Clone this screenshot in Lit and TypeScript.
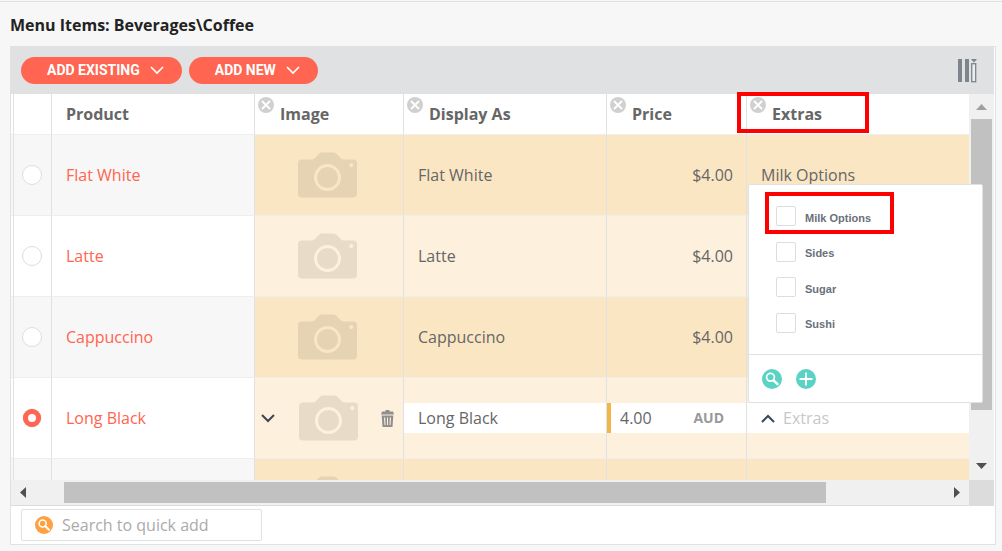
import { LitElement, html, css, svg, nothing } from "lit";
import { customElement, state } from "lit/decorators.js";
import { classMap } from "lit/directives/class-map.js";

interface MenuItem {
  name: string;
  price: string;
  extras: string;
}

const ITEMS: MenuItem[] = [
  { name: "Flat White", price: "$4.00", extras: "Milk Options" },
  { name: "Latte", price: "$4.00", extras: "" },
  { name: "Cappuccino", price: "$4.00", extras: "" },
  { name: "Long Black", price: "4.00", extras: "" },
  { name: "", price: "", extras: "" },
];

const EXTRAS = ["Milk Options", "Sides", "Sugar", "Sushi"];

const chevron = (up = false) => html`<svg class="chevron" width="14" height="9" viewBox="0 0 14 9" aria-hidden="true">
  ${up ? svg`<path d="M1 8 L7 2 L13 8" />` : svg`<path d="M1 1 L7 7 L13 1" />`}
</svg>`;

const camera = html`<svg class="camera" width="59" height="46" viewBox="0 0 59 46" aria-hidden="true">
  <path
    fill-rule="evenodd"
    d="M4 7.500H13.500Q15.500 7.500 17 6L21 1.800Q22.500 .5 24.500 .5H35Q37 .5 38.500 1.800L42.500 6Q44 7.500 46 7.500H55Q59 7.500 59 11.500V41.500Q59 45.500 55 45.500H4Q0 45.500 0 41.500V11.500Q0 7.500 4 7.500ZM29.500 12A13.500 13.500 0 1 0 29.500 39A13.500 13.500 0 1 0 29.500 12ZM53.300 11A2.100 2.100 0 1 0 53.300 15.200A2.100 2.100 0 1 0 53.300 11Z"
  />
  <circle cx="29.500" cy="25.500" r="10.500" />
</svg>`;

const trash = html`<svg width="13" height="17" viewBox="0 0 13 17" aria-hidden="true">
  <path fill="#8f8f8f" d="M4.500 0H8.500V1.500H12L13 4.500H0L1 1.500H4.500Z" />
  <path fill="#8f8f8f" fill-rule="evenodd" d="M.7 5.500H12.300L11.500 17H1.500ZM3 7.500L3.500 15H4.500L4.200 7.500ZM6 7.500V15H7V7.500ZM8.800 7.500L8.500 15H9.500L10 7.500Z" />
</svg>`;

const magnifier = (size: number) => html`<svg width=${size} height=${size} viewBox="0 0 20 20" aria-hidden="true">
  <circle class="disc" cx="10" cy="10" r="10" />
  <circle cx="8.500" cy="8.300" r="3.900" fill="none" stroke="#fff" stroke-width="1.700" />
  <path d="M11.500 11.300L15.500 15.200" stroke="#fff" stroke-width="2.400" stroke-linecap="round" />
</svg>`;

@customElement("app-root")
export class AppRoot extends LitElement {
  @state() private selected = 3;

  static styles = css`
    :host {
      display: block;
      min-height: 100vh;
      box-sizing: border-box;
      padding: 1px 6px 6px 10px;
      background: #f7f7f7;
      font: 16px/22px "Open Sans", "Noto Sans", sans-serif;
      color: #666;
    }
    *, *::before { box-sizing: border-box; }
    button, input { font: inherit; color: inherit; border: 0; padding: 0; margin: 0; background: none; border-radius: 0; }
    button { cursor: pointer; display: inline-flex; align-items: center; justify-content: center; }
    svg { display: block; flex: none; }
    .rule { height: 1px; background: #e0e0e0; margin: 0 -6px 0 -10px; }
    h1 { margin: 0; padding: 12px 0 10px; font-size: 16px; line-height: 22px; font-weight: 700; color: #222; }
    .panel { border: 1px solid #e0e1e3; background: #fff; }
    .toolbar { display: flex; align-items: center; gap: 7px; height: 47px; margin-right: 1px; padding: 0 17px 0 10px; background: #e0e1e3; }
    .pill {
      height: 27px; border-radius: 14px; background: #ff6550; color: #fff;
      padding: 0 18px 0 26px; gap: 10px;
      font: 700 14px/27px Roboto, sans-serif;
    }
    .columns { margin-left: auto; }
    .chevron path { fill: none; stroke: #3d4654; stroke-width: 2; }
    .pill .chevron path { stroke: #fff; stroke-width: 1.600; }

    .grid { position: relative; display: grid; grid-template-columns: minmax(0, 1fr) 25px; margin-right: 1px; border-bottom: 1px solid #dcdcdc; }
    .viewport { height: 386px; overflow: hidden; }
    table { width: 100%; table-layout: fixed; border-collapse: separate; border-spacing: 0; }
    th, td { padding: 0; border-right: 1px solid #e0e1e3; border-bottom: 1px solid #eee; text-align: left; font-weight: 400; }
    th:last-child, td:last-child { border-right: 0; }
    th { height: 41px; font-weight: 700; vertical-align: top; }
    td { height: 81px; vertical-align: middle; }
    .w-edge { width: 3px; }
    .w-radio { width: 38px; }
    .w-text { width: 203px; }
    .w-image { width: 149px; }
    .w-price { width: 140px; }
    .head { display: flex; gap: 6px; padding: 3px 0 0 3px; }
    .head span { padding-top: 6px; }
    .head.plain { padding-left: 14px; }
    .remove { width: 16px; height: 16px; }
    .plain-cell { background: #fff; }
    .tint { background: #fdf0dc; }
    .odd .plain-cell { background: #f7f7f7; }
    .odd .tint { background: #fbe6c4; }
    .pad { padding: 0 14px; }
    .num { text-align: right; padding-right: 13px; }
    a { color: #ff6550; text-decoration: none; }
    .select { padding-right: 1px; }
    .radio {
      appearance: none; display: block; width: 20px; height: 20px; margin: 0 auto;
      border: 1px solid #ddd; border-radius: 50%; background: #fff;
    }
    .radio:checked { border: 5px solid #ff6550; box-shadow: 0 0 1px #999; width: 18px; height: 18px; }
    .picture { display: flex; align-items: center; justify-content: center; padding: 0 9px 0 6px; }
    .picture.active { justify-content: space-between; }
    .camera { fill: #000; opacity: 0.08; }
    .field { display: flex; align-items: center; height: 30px; background: #fff; }
    .field input { flex: 1; min-width: 0; height: 30px; outline: 0; }
    .name-field { padding: 0 14px; }
    .price-field { border-left: 4px solid #f2b548; padding: 0 22px 0 9px; }
    .currency { font-size: 14px; font-weight: 700; color: #999; }
    .extras-field { padding-left: 14px; gap: 8px; }
    input::placeholder { color: #aaa; opacity: 1; }
    .extras-field input::placeholder { color: #c8c8c8; }

    .bar { display: flex; align-items: center; background: #f0f0f0; }
    .bar.v { flex-direction: column; padding: 10px 0 11px; }
    .bar.h { height: 25px; padding: 0 9px; }
    .track { flex: 1; display: flex; }
    .v .track { width: 21px; margin: 9px 0 53px; background: #c1c1c1; }
    .h .track { height: 21px; margin: 0 128px 0 38px; background: #c1c1c1; }
    .corner { background: #dcdcdc; }

    .menu {
      position: absolute; right: 11px; top: 90px; width: 235px; height: 219px;
      display: flex; flex-direction: column; background: #fff; border: 1px solid #e0e1e3; border-radius: 2px;
    }
    .options { flex: 1; display: flex; flex-direction: column; justify-content: space-between; padding: 21px 27px; }
    .option { display: flex; align-items: center; gap: 9px; height: 20px; font: 700 11px/20px "Liberation Sans", Arial, sans-serif; color: #6a707a; }
    .option span { padding-top: 3px; }
    .check { appearance: none; width: 20px; height: 20px; border: 1px solid #ddd; border-radius: 2px; background: #fff; }
    .actions { display: flex; align-items: center; gap: 14px; height: 48px; padding: 0 13px; border-top: 1px solid #e0e1e3; }
    .actions .disc { fill: #5ad3c4; }
    .mark { position: absolute; border: 4px solid #f00; pointer-events: none; }
    .mark-head { right: 125px; top: -2px; width: 132px; height: 41px; }
    .mark-option { left: 16px; top: 7px; width: 129px; height: 42px; }

    .footer { padding: 3px 10px; height: 38px; }
    .search { display: flex; align-items: center; gap: 9px; width: 241px; height: 32px; padding: 0 13px; border: 1px solid #e0e1e3; border-radius: 2px; }
    .search .disc { fill: #ffa040; }
    .search input { flex: 1; min-width: 0; outline: 0; }
  `;

  private head(label: string) {
    return html`<div class="head">
      <button class="remove" aria-label="Remove ${label} column">
        <svg width="16" height="16" viewBox="0 0 16 16" aria-hidden="true">
          <circle cx="8" cy="8" r="8" fill="#d0d0d0" />
          <path d="M4 4L12 12M12 4L4 12" stroke="#fff" stroke-width="1.800" />
        </svg>
      </button>
      <span>${label}</span>
    </div>`;
  }

  private row(item: MenuItem, i: number) {
    const active = i === 3;
    return html`<tr class=${classMap({ odd: i % 2 === 0 })}>
      <td class="plain-cell"></td>
      <td class="plain-cell select">
        <input class="radio" type="radio" name="item" aria-label=${item.name || "New item"}
          .checked=${this.selected === i} @change=${() => (this.selected = i)} />
      </td>
      <td class="plain-cell pad">${item.name ? html`<a href="#">${item.name}</a>` : nothing}</td>
      <td class="tint">
        <div class=${classMap({ picture: true, active })}>
          ${active ? html`<button aria-label="Choose image">${chevron()}</button>` : nothing}
          ${camera}
          ${active ? html`<button aria-label="Delete image">${trash}</button>` : nothing}
        </div>
      </td>
      ${active
        ? html`<td class="tint">
              <div class="field name-field"><input type="text" aria-label="Display As" .value=${item.name} /></div>
            </td>
            <td class="tint">
              <div class="field price-field">
                <input type="text" aria-label="Price" .value=${item.price} /><span class="currency">AUD</span>
              </div>
            </td>
            <td class="tint">
              <div class="field extras-field">
                <button aria-label="Close extras">${chevron(true)}</button>
                <input type="text" aria-label="Extras" placeholder="Extras" />
              </div>
            </td>`
        : html`<td class="tint pad">${item.name}</td>
            <td class="tint num">${item.price}</td>
            <td class="tint pad">${item.extras}</td>`}
    </tr>`;
  }

  render() {
    return html`
      <div class="rule"></div>
      <h1>Menu Items: Beverages\\Coffee</h1>
      <div class="panel">
        <div class="toolbar">
          <button class="pill">ADD EXISTING ${chevron()}</button>
          <button class="pill">ADD NEW ${chevron()}</button>
          <button class="columns" aria-label="Columns">
            <svg width="19" height="24" viewBox="0 0 19 24" aria-hidden="true">
              <path fill="#7d848b" d="M0 0H4V23H0ZM7 0H11V23H7ZM13 0H19L16 3.500Z" />
              <rect x="13.700" y="4.700" width="4" height="18" fill="#eceded" stroke="#7d848b" stroke-width="1.300" />
            </svg>
          </button>
        </div>
        <div class="grid">
          <div class="viewport">
            <table>
              <colgroup>
                <col class="w-edge" /><col class="w-radio" /><col class="w-text" /><col class="w-image" />
                <col class="w-text" /><col class="w-price" /><col />
              </colgroup>
              <thead>
                <tr>
                  <th></th>
                  <th></th>
                  <th><div class="head plain"><span>Product</span></div></th>
                  <th>${this.head("Image")}</th>
                  <th>${this.head("Display As")}</th>
                  <th>${this.head("Price")}</th>
                  <th>${this.head("Extras")}</th>
                </tr>
              </thead>
              <tbody>${ITEMS.map((item, i) => this.row(item, i))}</tbody>
            </table>
          </div>
          <div class="bar v">
            <svg width="11" height="6" viewBox="0 0 11 6" aria-hidden="true"><path fill="#a0a0a0" d="M0 6L5.500 0L11 6Z" /></svg>
            <div class="track"></div>
            <svg width="11" height="6" viewBox="0 0 11 6" aria-hidden="true"><path fill="#505050" d="M0 0H11L5.500 6Z" /></svg>
          </div>
          <div class="bar h">
            <svg width="6" height="11" viewBox="0 0 6 11" aria-hidden="true"><path fill="#505050" d="M6 0V11L0 5.500Z" /></svg>
            <div class="track"></div>
            <svg width="6" height="11" viewBox="0 0 6 11" aria-hidden="true"><path fill="#505050" d="M0 0L6 5.500L0 11Z" /></svg>
          </div>
          <div class="corner"></div>
          <div class="mark mark-head"></div>
          <div class="menu">
            <div class="options">
              ${EXTRAS.map(
                (name) => html`<label class="option"><input class="check" type="checkbox" /><span>${name}</span></label>`
              )}
            </div>
            <div class="actions">
              <button aria-label="Search extras">${magnifier(20)}</button>
              <button aria-label="Add extra">
                <svg width="20" height="20" viewBox="0 0 20 20" aria-hidden="true">
                  <circle class="disc" cx="10" cy="10" r="10" />
                  <path d="M10 3.500V16.500M3.500 10H16.500" stroke="#fff" stroke-width="2" />
                </svg>
              </button>
            </div>
            <div class="mark mark-option"></div>
          </div>
        </div>
        <div class="footer">
          <label class="search">${magnifier(18)}<input type="text" aria-label="Search to quick add" placeholder="Search to quick add" /></label>
        </div>
      </div>
    `;
  }
}
